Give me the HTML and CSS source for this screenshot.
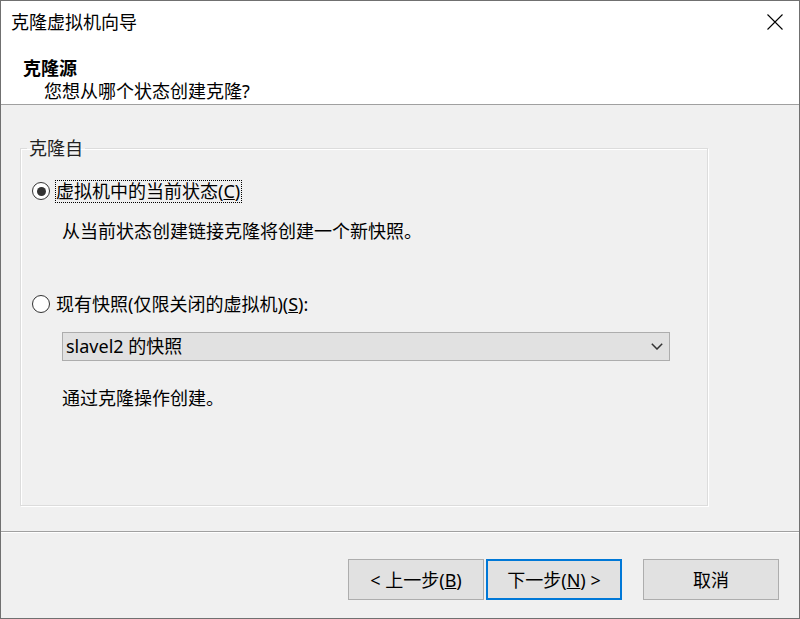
FILE: index.html
```html
<!DOCTYPE html>
<html lang="zh-CN">
<head>
<meta charset="utf-8">
<title>克隆虚拟机向导</title>
<link rel="stylesheet" href="styles.css">
</head>
<body>
<div class="window">
  <div class="header">
    <div class="titlebar">
      <span class="title">克隆虚拟机向导</span>
      <svg class="close" width="16" height="16" viewBox="0 0 16 16"><path d="M0.5 0.5 L15.5 15.5 M15.5 0.5 L0.5 15.5" stroke="#000" stroke-width="1.1" fill="none"/></svg>
    </div>
    <div class="heading">克隆源</div>
    <div class="subheading">您想从哪个状态创建克隆?</div>
  </div>
  <div class="main">
    <fieldset class="group">
      <legend>克隆自</legend>
      <div class="option first">
        <span class="radio checked"></span>
        <span class="label focus">虚拟机中的当前状态(<u>C</u>)</span>
      </div>
      <p class="desc">从当前状态创建链接克隆将创建一个新快照。</p>
      <div class="option second">
        <span class="radio"></span>
        <span class="label">现有快照(仅限关闭的虚拟机)(<u>S</u>):</span>
      </div>
      <div class="combo">
        <span class="combo-text">slavel2 的快照</span>
        <svg class="chevron" width="12" height="7" viewBox="0 0 12 7"><path d="M0.8 0.8 L6 6 L11.2 0.8" stroke="#333" stroke-width="1.5" fill="none"/></svg>
      </div>
      <p class="desc last">通过克隆操作创建。</p>
    </fieldset>
  </div>
  <div class="footer">
    <button class="btn">&lt; 上一步(<u>B</u>)</button>
    <button class="btn default">下一步(<u>N</u>) &gt;</button>
    <button class="btn cancel">取消</button>
  </div>
</div>
</body>
</html>
```

FILE: styles.css
```css
* { box-sizing: border-box; }
html, body { margin: 0; padding: 0; }
body {
  width: 800px;
  height: 619px;
  overflow: hidden;
  font-family: "Noto Sans", "Noto Sans CJK SC", sans-serif;
  font-size: 18px;
  color: #000;
  background: #f0f0f0;
}
.window {
  width: 800px;
  height: 619px;
  border: 1px solid #707070;
  display: flex;
  flex-direction: column;
  background: #f0f0f0;
}
.header {
  height: 104px;
  flex: none;
  background: #fff;
  border-bottom: 1px solid #a0a0a0;
}
.titlebar {
  height: 42px;
  display: flex;
  align-items: center;
  justify-content: space-between;
  padding-left: 10px;
  padding-right: 16px;
}
.title { line-height: 24px; }
.close { display: block; }
.heading {
  margin-top: 14px;
  padding-left: 22px;
  font-weight: bold;
  line-height: 23px;
}
.subheading {
  padding-left: 43px;
  line-height: 23px;
}
.main {
  flex: 1;
  padding: 31px 0 0 19px;
}
.group {
  margin: 0;
  padding: 0;
  width: 688px;
  height: 370px;
  border: 1px solid #dcdcdc;
  box-shadow: inset 1px 1px 0 #fff, 1px 1px 0 #fff;
}
.group legend {
  margin-left: 6px;
  padding: 0 2px;
  line-height: 24px;
  color: #222;
}
.option {
  display: flex;
  align-items: center;
  height: 24px;
  padding-left: 11px;
}
.option.first { margin-top: 19px; }
.option.second { margin-top: 49px; }
.radio {
  width: 18px;
  height: 18px;
  border: 1px solid #333;
  border-radius: 50%;
  background: #fff;
  display: flex;
  align-items: center;
  justify-content: center;
  flex: none;
}
.radio.checked::after {
  content: "";
  width: 9px;
  height: 9px;
  border-radius: 50%;
  background: #333;
}
.label {
  margin-left: 5px;
  line-height: 21px;
  border: 1px solid transparent;
  padding: 0 1px 0 0;
}
.label.focus { border: 1px dotted #000; }
.desc {
  margin: 16px 0 0 41px;
  line-height: 24px;
}
.desc.last { margin-top: 25px; }
.combo {
  margin: 16px 0 0 41px;
  width: 608px;
  height: 29px;
  background: #e1e1e1;
  border: 1px solid #adadad;
  display: flex;
  align-items: center;
  justify-content: space-between;
  padding: 0 6px 0 3px;
}
.combo-text { line-height: 27px; }
.chevron { display: block; }
.footer {
  height: 87px;
  flex: none;
  border-top: 1px solid #a0a0a0;
  box-shadow: inset 0 1px 0 #fff;
  display: flex;
  justify-content: flex-end;
  align-items: flex-start;
  padding: 27px 20px 0 0;
}
.btn {
  width: 136px;
  height: 41px;
  background: #e1e1e1;
  border: 1px solid #adadad;
  font-family: "Noto Sans", "Noto Sans CJK SC", sans-serif;
  font-size: 18px;
  color: #000;
  padding: 0;
  margin: 0;
  line-height: 24px;
}
.btn.default {
  margin-left: 2px;
  border: 2px solid #0078d7;
}
.btn.cancel { margin-left: 21px; }
```
